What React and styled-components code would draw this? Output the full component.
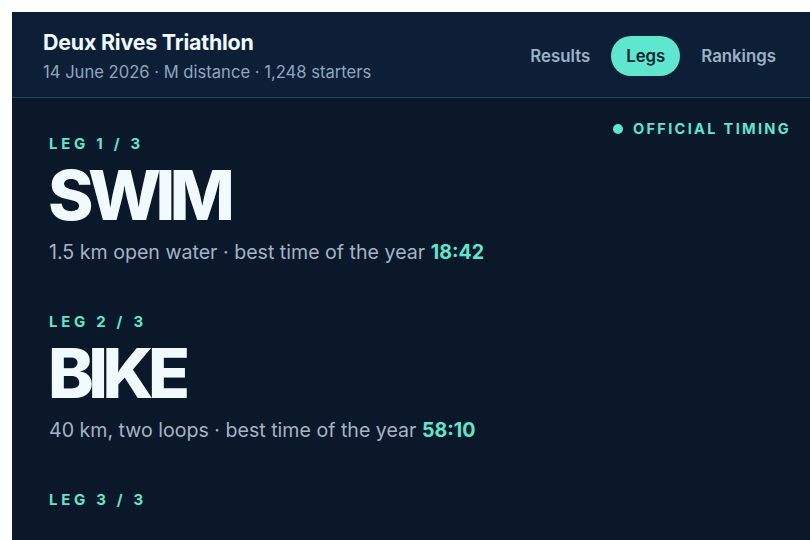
import React from 'react'
import styled, { createGlobalStyle } from 'styled-components'

const GlobalStyle = createGlobalStyle`
  html, body {
    margin: 0;
    padding: 0;
    background: #ffffff;
    overflow: hidden;
  }
  body {
    font-family: Inter, "Noto Sans", sans-serif;
  }
`

export const Page = styled.div`
  padding: 12px 0 0 12px;
`

export const Panel = styled.div`
  width: 808px;
  height: 528px;
  overflow: hidden;
  background-color: #0a1829;
`

export const Header = styled.header`
  height: 85px;
  display: flex;
  align-items: center;
  justify-content: space-between;
  padding: 0 29px 0 31px;
  background-color: #0c1f37;
  border-bottom: 1px solid #1d4a59;
`

export const Brand = styled.div`
  display: flex;
  flex-direction: column;
  gap: 7px;
  margin-top: 2px;
`

export const Title = styled.h1`
  margin: 0;
  font-size: 21.4px;
  font-weight: 700;
  color: #eefaff;
  letter-spacing: -0.2px;
`

export const Meta = styled.div`
  font-size: 16.6px;
  color: #90a6bc;
`

export const Nav = styled.nav`
  display: flex;
  align-items: center;
  gap: 6px;
  margin-top: 2px;
`

export const NavItem = styled.a`
  height: 40px;
  display: flex;
  align-items: center;
  padding: 0 15px;
  border-radius: 20px;
  font-size: 16.8px;
  font-weight: 600;
  color: ${p => (p.$active ? '#07212d' : '#9cb3c7')};
  background-color: ${p => (p.$active ? '#5fe6cf' : 'transparent')};
`

export const Body = styled.main`
  display: flex;
  justify-content: space-between;
  align-items: flex-start;
  padding: 22px 29px 0 37px;
`

export const Legs = styled.div`
  display: flex;
  flex-direction: column;
  padding-top: 15px;
`

export const Leg = styled.section`
  height: 178px;
`

export const LegLabel = styled.div`
  font-size: 15px;
  font-weight: 700;
  letter-spacing: 3.7px;
  color: #5fe6cf;
  line-height: 18px;
`

export const LegName = styled.h2`
  margin: 2px 0 0 -1px;
  font-size: 69px;
  font-weight: 800;
  line-height: 80px;
  letter-spacing: -5.5px;
  color: #f1fbff;
`

export const LegInfo = styled.p`
  margin: 5px 0 0;
  font-size: 19.6px;
  color: #a3b4c5;
`

export const BestTime = styled.strong`
  font-weight: 700;
  color: #5fe6cf;
`

export const Badge = styled.div`
  display: flex;
  align-items: center;
  gap: 10px;
  font-size: 14.6px;
  font-weight: 700;
  letter-spacing: 2.3px;
  color: #5fe6cf;
`

export const Dot = styled.span`
  width: 10px;
  height: 10px;
  border-radius: 50%;
  background-color: #5fe6cf;
`

const legs = [
  { n: 1, name: 'SWIM', info: '1.5 km open water', time: '18:42' },
  { n: 2, name: 'BIKE', info: '40 km, two loops', time: '58:10' },
  { n: 3 },
]

function App() {
  return (
    <Page>
      <GlobalStyle />
      <Panel>
        <Header>
          <Brand>
            <Title>Deux Rives Triathlon</Title>
            <Meta>14 June 2026 · M distance · 1,248 starters</Meta>
          </Brand>
          <Nav>
            <NavItem>Results</NavItem>
            <NavItem $active>Legs</NavItem>
            <NavItem>Rankings</NavItem>
          </Nav>
        </Header>
        <Body>
          <Legs>
            {legs.map(leg => (
              <Leg key={leg.n}>
                <LegLabel>LEG {leg.n} / 3</LegLabel>
                {leg.name && <LegName>{leg.name}</LegName>}
                {leg.info && (
                  <LegInfo>
                    {leg.info} · best time of the year <BestTime>{leg.time}</BestTime>
                  </LegInfo>
                )}
              </Leg>
            ))}
          </Legs>
          <Badge>
            <Dot />
            OFFICIAL TIMING
          </Badge>
        </Body>
      </Panel>
    </Page>
  )
}

export default App
